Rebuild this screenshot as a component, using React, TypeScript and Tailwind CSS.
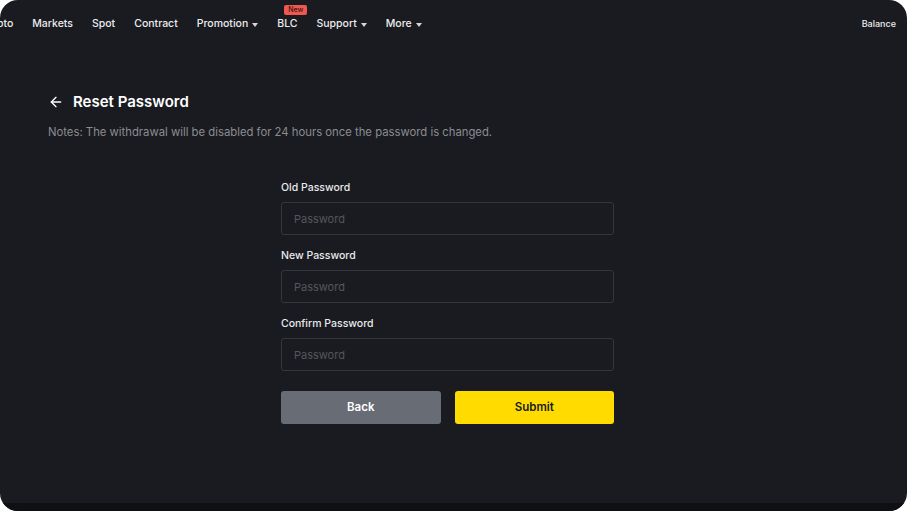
import { ArrowLeft } from "lucide-react";

const navItems = [
  { label: "Markets" },
  { label: "Spot" },
  { label: "Contract" },
  { label: "Promotion", caret: true },
  { label: "BLC", badge: "New" },
  { label: "Support", caret: true },
  { label: "More", caret: true },
];

function Caret() {
  return (
    <svg width="6" height="4" viewBox="0 0 6 4" className="ml-[4px] mt-[2px]">
      <path d="M0 0h6L3 4z" fill="#d4d5d8" />
    </svg>
  );
}

function Field({ label }: { label: string }) {
  return (
    <div className="flex flex-col">
      <label className="text-[10.5px] font-medium leading-[14px] text-[#e8e9eb]">{label}</label>
      <input
        type="password"
        placeholder="Password"
        className="mt-[7px] h-[33px] w-full rounded-[3px] border border-[#35363c] bg-transparent px-[12px] text-[11px] text-white outline-none placeholder:text-[#55565c]"
      />
    </div>
  );
}

export default function App() {
  return (
    <div
      className="h-[511px] w-[907px] bg-white"
      style={{ fontFamily: "Inter, 'Noto Sans', sans-serif" }}
    >
      <div className="flex h-full flex-col overflow-hidden rounded-[18px] bg-[#1a1b20]">
        <header className="flex h-[46px] shrink-0 items-center justify-between pr-[11px] pt-[2px]">
          <nav className="-ml-[21px] flex items-center gap-[19px] text-[10.5px] font-medium text-[#ececee]">
            <span>Crypto</span>
            {navItems.map((item) => (
              <span key={item.label} className="relative flex items-center">
                {item.label}
                {item.caret && <Caret />}
                {item.badge && (
                  <span className="absolute -top-[11px] left-[7px] rounded-[2px] bg-[#f0574f] px-[4px] text-[7px] leading-[10px] font-medium text-[#3a1412]">
                    {item.badge}
                  </span>
                )}
              </span>
            ))}
          </nav>
          <span className="text-[9px] font-medium text-[#ececee]">Balance</span>
        </header>

        <main className="flex-1 px-[48px] pt-[45px]">
          <div className="flex items-center gap-[9px]">
            <ArrowLeft size={16} strokeWidth={2} className="text-white" />
            <h1 className="text-[15px] font-semibold leading-[22px] text-white">Reset Password</h1>
          </div>
          <p className="mt-[11px] text-[11.3px] leading-[16px] text-[#8b8c91]">
            Notes: The withdrawal will be disabled for 24 hours once the password is changed.
          </p>

          <form className="ml-[233px] mt-[41px] flex w-[333px] flex-col gap-[14px]">
            <Field label="Old Password" />
            <Field label="New Password" />
            <Field label="Confirm Password" />
            <div className="mt-[6px] flex gap-[14px]">
              <button
                type="button"
                className="h-[33px] flex-1 rounded-[3px] bg-[#676c75] text-[11.5px] font-semibold text-white"
              >
                Back
              </button>
              <button
                type="button"
                className="h-[33px] flex-1 rounded-[3px] bg-[#ffdb00] text-[11.5px] font-semibold text-[#1a1b20]"
              >
                Submit
              </button>
            </div>
          </form>
        </main>

        <div className="h-[8px] shrink-0 bg-[#0f1013]" />
      </div>
    </div>
  );
}
